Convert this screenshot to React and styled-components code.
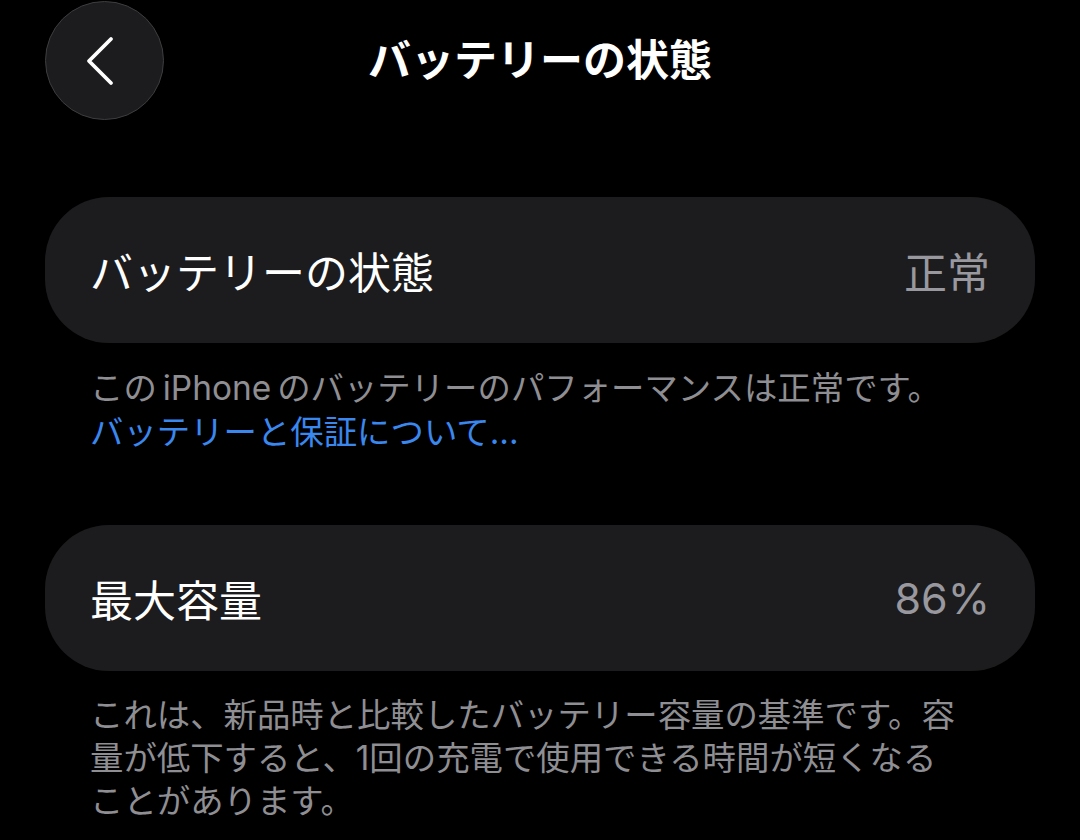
import React from 'react';
import styled, { createGlobalStyle } from 'styled-components';

const GlobalStyle = createGlobalStyle`
  html, body {
    margin: 0;
    padding: 0;
    background: #000;
  }
  body {
    font-family: 'Inter', 'Noto Sans CJK JP', sans-serif;
    -webkit-font-smoothing: antialiased;
  }
`;

export default function App() {
  return (
    <>
      <GlobalStyle />
      <Page>
        <Header>
          <BackButton aria-label='戻る'>
            <svg width='40' height='52' viewBox='0 0 40 52' fill='none'>
              <path
                d='M29 4 L7 26 L29 48'
                stroke='#fff'
                strokeWidth='3.8'
                strokeLinecap='round'
                strokeLinejoin='round'
              />
            </svg>
          </BackButton>
          <Title>バッテリーの状態</Title>
          <span />
        </Header>

        <Card $top={77}>
          <Label>バッテリーの状態</Label>
          <Value>正常</Value>
        </Card>
        <Footnote>
          この<Latin>iPhone</Latin>のバッテリーのパフォーマンスは正常です。
          <br />
          <Link>バッテリーと保証について...</Link>
        </Footnote>

        <Card $top={71}>
          <Label>最大容量</Label>
          <Value>86%</Value>
        </Card>
        <Footnote $lineHeight={43}>
          これは、新品時と比較したバッテリー容量の基準です。容
          <br />
          量が低下すると、1回の充電で使用できる時間が短くなる
          <br />
          ことがあります。
        </Footnote>
      </Page>
    </>
  );
}

const Page = styled.div`
  width: 1080px;
  box-sizing: border-box;
  padding: 1px 45px 0;
`;

const Header = styled.header`
  display: grid;
  grid-template-columns: 119px 1fr 119px;
  align-items: center;
  height: 119px;
`;

const BackButton = styled.button`
  display: flex;
  align-items: center;
  justify-content: center;
  width: 119px;
  height: 119px;
  padding: 0 6px 0 0;
  border: 1.5px solid #3d3d40;
  border-radius: 50%;
  background-color: #1c1c1e;
  box-sizing: border-box;
`;

const Title = styled.h1`
  margin: 0;
  color: #fff;
  font-size: 43px;
  font-weight: 700;
  text-align: center;
  line-height: 1;
`;

const Card = styled.div`
  display: flex;
  align-items: center;
  justify-content: space-between;
  height: 146px;
  margin-top: ${props => props.$top}px;
  padding: 0 45px;
  border-radius: 64px;
  background-color: #1c1c1e;
`;

const Label = styled.span`
  color: #fff;
  font-size: 43px;
`;

const Value = styled.span`
  color: #98989e;
  font-size: 43px;
`;

const Footnote = styled.p`
  margin: 23px 0 0;
  padding: 0 45px;
  color: #8e8e93;
  font-size: 33.4px;
  line-height: ${props => props.$lineHeight || 44}px;
  white-space: nowrap;
`;

const Latin = styled.span`
  margin: 0 6px;
`;

const Link = styled.span`
  color: #3a87ee;
`;
